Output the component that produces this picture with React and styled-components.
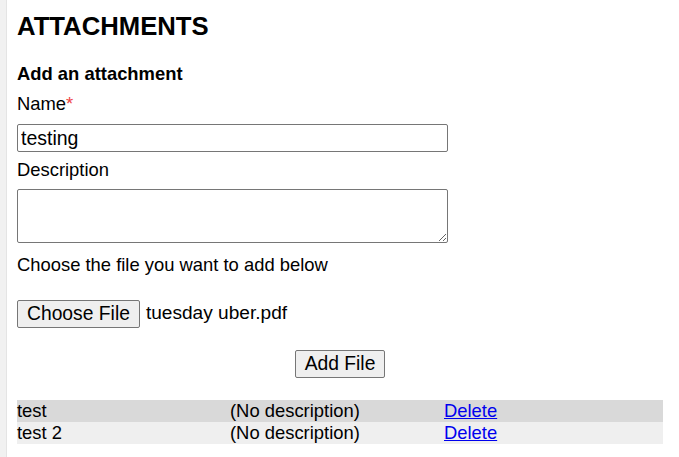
import styled, { createGlobalStyle } from "styled-components";

const GlobalStyle = createGlobalStyle`
  html, body {
    margin: 0;
    padding: 0;
    background: #fff;
  }
  body {
    font-family: "Liberation Sans", Arial, sans-serif;
    font-size: 18.4px;
    line-height: 20.7px;
    color: #000;
  }
`;

const attachments = [
  { name: "test", description: "(No description)" },
  { name: "test 2", description: "(No description)" },
];

export default function App() {
  return (
    <>
      <GlobalStyle />
      <Page>
        <Content>
          <Title>ATTACHMENTS</Title>
          <Form>
            <SubTitle>Add an attachment</SubTitle>
            <Label>
              Name<Required>*</Required>
            </Label>
            <TextInput defaultValue="testing" />
            <Label $gap={8}>Description</Label>
            <TextArea />
            <Hint>Choose the file you want to add below</Hint>
            <FileRow>
              <Button type="button">Choose File</Button>
              <FileName>tuesday uber.pdf</FileName>
            </FileRow>
            <Actions>
              <Button type="button">Add File</Button>
            </Actions>
          </Form>
          <List>
            {attachments.map((a, i) => (
              <Row key={a.name} $shade={i % 2 === 0 ? "#d9d9d9" : "#efefef"}>
                <Cell>{a.name}</Cell>
                <Cell>{a.description}</Cell>
                <Cell>
                  <DeleteLink href="#">Delete</DeleteLink>
                </Cell>
              </Row>
            ))}
          </List>
        </Content>
      </Page>
    </>
  );
}

const Page = styled.div`
  display: flex;
  min-height: 457px;
  border-left: 6px solid #f1f1f1;
  box-shadow: inset 1px 0 0 #e4e4e4;
`;

const Content = styled.div`
  flex: 1;
  padding: 12px 16px 0 11px;
  display: flex;
  flex-direction: column;
`;

const Title = styled.h1`
  margin: 0;
  font-size: 25.7px;
  line-height: 29px;
  font-weight: bold;
`;

const Form = styled.div`
  display: flex;
  flex-direction: column;
  align-items: flex-start;
`;

const SubTitle = styled.div`
  margin-top: 23px;
  font-weight: bold;
`;

const Label = styled.div`
  margin-top: ${(p) => p.$gap ?? 9}px;
`;

const Required = styled.span`
  color: #ee4444;
`;

const TextInput = styled.input`
  margin-top: 10px;
  box-sizing: border-box;
  width: 431px;
  height: 28px;
  padding: 0 3px;
  border: 1px solid #767676;
  border-radius: 2px;
  font-family: inherit;
  font-size: 19.5px;
  color: #000;
  outline: none;
`;

const TextArea = styled.textarea`
  margin-top: 8px;
  box-sizing: border-box;
  width: 431px;
  height: 54px;
  padding: 2px 3px;
  border: 1px solid #767676;
  border-radius: 2px;
  font-family: inherit;
  font-size: 18px;
  outline: none;
`;

const Hint = styled.div`
  margin-top: 12px;
`;

const FileRow = styled.div`
  margin-top: 24px;
  display: flex;
  align-items: center;
  gap: 6px;
`;

const Button = styled.button`
  box-sizing: border-box;
  height: 28px;
  padding: 0 9px;
  background: #efefef;
  border: 1px solid #767676;
  border-radius: 2px;
  font-family: inherit;
  font-size: 19.3px;
  color: #000;
  cursor: default;
`;

const FileName = styled.span`
  font-size: 19.1px;
`;

const Actions = styled.div`
  align-self: stretch;
  margin-top: 22px;
  width: 646px;
  display: flex;
  justify-content: center;
`;

const List = styled.div`
  margin-top: 22px;
  width: 646px;
  display: flex;
  flex-direction: column;
`;

const Row = styled.div`
  display: grid;
  grid-template-columns: 213px 214px 1fr;
  height: 22px;
  align-items: center;
  background: ${(p) => p.$shade};
`;

const Cell = styled.div`
  line-height: 22px;
  white-space: nowrap;
`;

const DeleteLink = styled.a`
  color: #0000ee;
  text-decoration: underline;
`;
